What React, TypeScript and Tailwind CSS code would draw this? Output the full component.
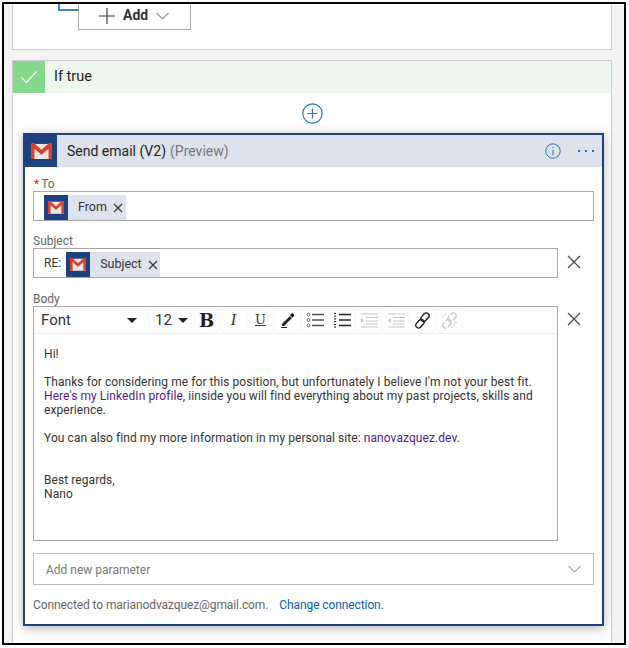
import { ReactNode } from "react";

function GmailIcon({ size = 22 }: { size?: number }) {
  return (
    <svg width={size} height={size * 0.8} viewBox="0 0 22 17.6">
      <path d="M0 1h22v16.6H0z" fill="#e8e6e4" />
      <path d="M3 1l8 7 8-7v3l-8 7-8-7z" fill="#cfcac7" />
      <path d="M0 1.5C0 .6.6 0 1.5 0H3l8 7.2L19 0h1.5c.9 0 1.5.6 1.5 1.500v16.100h-3.600V6l-7.400 6.200L3.600 6v11.600H0z" fill="#d8412f" />
    </svg>
  );
}

function Token({ label, className }: { label: string; className: string }) {
  return (
    <div className={`flex h-[25px] self-end items-stretch bg-[#dee2ec] ${className}`}>
      <div className="flex w-6 shrink-0 items-center justify-center bg-[#1f4180]">
        <GmailIcon size={16} />
      </div>
      <span className="ml-[10px] self-center text-[12.5px] text-[#333]">{label}</span>
      <svg className="ml-[6px] self-center" width="10" height="10" viewBox="0 0 10 10" stroke="#333" strokeWidth="1.2">
        <path d="M1 1l8 8M9 1l-8 8" />
      </svg>
    </div>
  );
}

function CloseIcon() {
  return (
    <svg width="14" height="14" viewBox="0 0 14 14" stroke="#444" strokeWidth="1.1">
      <path d="M1 1l12 12M13 1L1 13" />
    </svg>
  );
}

function ToolButton({ children }: { children: ReactNode }) {
  return (
    <div className="flex h-[23px] w-[25px] items-center justify-center rounded-sm bg-white shadow-[0_0_1px_rgba(0,0,0,0.18)]">
      {children}
    </div>
  );
}

function ListIcon({ ordered }: { ordered?: boolean }) {
  const color = ordered ? "#222" : "#555";
  return (
    <svg width="18" height="16" viewBox="0 0 18 16" fill="none" stroke={color}>
      {ordered ? (
        <path d="M1 1.500h2M1 4h2M1 7h2M1 9.500h2M1 12.500h2M1 15h2" strokeWidth="1.200" />
      ) : (
        <>
          <circle cx="2.500" cy="2.500" r="1.400" strokeWidth="0.900" />
          <circle cx="2.500" cy="8" r="1.400" strokeWidth="0.900" />
          <circle cx="2.500" cy="13.500" r="1.400" strokeWidth="0.900" />
        </>
      )}
      <path d="M6 2.500h12M6 8h12M6 13.500h12" strokeWidth="1.300" />
    </svg>
  );
}

function IndentIcon({ outdent }: { outdent?: boolean }) {
  return (
    <svg width="18" height="15" viewBox="0 0 18 15" stroke="#c4c4c4" fill="none">
      <path d="M1 1h17M6 4.500h12M6 8h12M6 11h12M1 14h17" strokeWidth="1" />
      <path d={outdent ? "M4 5v5L1 7.500z" : "M1 5v5l3-2.500z"} fill="#c4c4c4" stroke="none" />
    </svg>
  );
}

function LinkIcon({ broken }: { broken?: boolean }) {
  const color = broken ? "#c9c9c9" : "#222";
  return (
    <svg width="17" height="17" viewBox="0 0 17 17" fill="none" stroke={color} strokeWidth="1.400">
      <rect x="8.200" y="0.500" width="5.500" height="9.500" rx="2.700" transform="rotate(42 11 5.200)" strokeDasharray={broken ? "8 2" : undefined} />
      <rect x="3.200" y="7" width="5.500" height="9.500" rx="2.700" transform="rotate(42 6 11.700)" strokeDasharray={broken ? "8 2" : undefined} />
      {broken && <path d="M2 2l2 2M5 .5v2M.5 5h2M12 12l2 2M14 10.500h2M10.500 14v2" strokeWidth="0.900" />}
    </svg>
  );
}

function Field({ label, children }: { label: ReactNode; children: ReactNode }) {
  return (
    <div>
      <div className="h-[14px] text-[12px] leading-[14px] text-[#666]">{label}</div>
      {children}
    </div>
  );
}

export default function App() {
  return (
    <div className="h-[648px] w-[629px] bg-white pt-[2px] pl-[2px]">
      <div className="flex h-[643px] w-[624px] flex-col overflow-hidden border-2 border-black bg-[#f3f3f3] font-['Roboto',sans-serif]">
        <div className="ml-2 mr-3 flex h-[46px] shrink-0 items-start border-x border-b border-[#cfcfcf] bg-white pl-[45px]">
          <div className="h-[7px] w-5 border-b-2 border-l-2 border-[#3a85d0]" />
          <div className="flex h-[26px] w-[113px] items-center border-x border-b border-[#a9a9a9] bg-white pb-[2px] pl-5">
            <svg width="16" height="16" viewBox="0 0 16 16" stroke="#333" strokeWidth="1.100">
              <path d="M8 0v16M0 8h16" />
            </svg>
            <span className="ml-2 text-[14px] font-bold text-[#333]">Add</span>
            <svg className="ml-2" width="13" height="8" viewBox="0 0 13 8" fill="none" stroke="#555">
              <path d="M.5 1l6 6 6-6" />
            </svg>
          </div>
        </div>

        <div className="ml-2 mr-3 mt-[10px] flex flex-1 flex-col items-center border-x border-t border-[#d0d0d0] bg-white">
          <div className="flex h-8 w-full items-center bg-[#edf7ed]">
            <div className="flex h-8 w-8 items-center justify-center bg-[#86d98c]">
              <svg width="16" height="12" viewBox="0 0 16 12" fill="none" stroke="#fff" strokeWidth="1.200">
                <path d="M.5 6.500l5 5L15.500.5" />
              </svg>
            </div>
            <span className="ml-[9px] text-[14.5px] text-[#222]">If true</span>
          </div>

          <svg className="mt-[10px] shrink-0" width="21" height="21" viewBox="0 0 21 21" fill="none" stroke="#2a6fc0">
            <circle cx="10.500" cy="10.500" r="9.700" strokeWidth="1.200" />
            <path d="M10.500 5.500v10M5.500 10.500h10" strokeWidth="1.200" />
          </svg>

          <div className="ml-[10px] mt-[9px] h-[493px] w-[581px] shrink-0 self-start border-2 border-[#1f4180] bg-white shadow-[0_2px_10px_rgba(0,0,0,0.3)]">
            <div className="flex h-8 items-center bg-[#dee2ec]">
              <div className="flex h-8 w-8 items-center justify-center bg-[#1f4180]">
                <GmailIcon size={21} />
              </div>
              <span className="ml-[10px] text-[14px] text-[#222]">Send email (V2)</span>
              <span className="ml-1 text-[14px] text-[#777]">(Preview)</span>
              <svg className="ml-auto" width="16" height="16" viewBox="0 0 16 16" fill="none" stroke="#2a6fc0">
                <circle cx="8" cy="8" r="7.200" />
                <path d="M8 7v5M8 4v1.400" />
              </svg>
              <div className="ml-[17px] mr-2 flex gap-[5px]">
                <span className="h-[2px] w-[2px] bg-[#2a6fc0]" />
                <span className="h-[2px] w-[2px] bg-[#2a6fc0]" />
                <span className="h-[2px] w-[2px] bg-[#2a6fc0]" />
              </div>
            </div>

            <div className="px-2 pt-[10px]">
              <Field label={<><span className="ml-[1px] mr-[2px] text-[#e02020]">*</span>To</>}>
                <div className="flex h-[30px] border border-[#a6a6a6] pl-[10px]">
                  <Token label="From" className="w-[82px]" />
                </div>
              </Field>

              <div className="mt-[13px] flex items-end">
                <div className="w-[525px]">
                  <Field label="Subject">
                    <div className="flex h-[30px] border border-[#a6a6a6] pl-[10px]">
                      <span className="mr-[5px] self-center text-[12px] text-[#333]">RE:</span>
                      <Token label="Subject" className="w-[94px]" />
                    </div>
                  </Field>
                </div>
                <div className="ml-[9px] mb-[9px] flex">
                  <CloseIcon />
                </div>
              </div>

              <div className="mt-[14px] flex items-start">
                <div className="w-[525px]">
                  <Field label="Body">
                    <div className="h-[235px] border border-[#a6a6a6]">
                      <div className="flex h-[27px] items-center gap-[2px] border-b border-[#efefef] pl-[1px]">
                        <div className="flex h-[23px] w-[113px] items-center justify-between rounded-sm bg-white pl-[6px] pr-[11px] shadow-[0_0_1px_rgba(0,0,0,0.18)]">
                          <span className="text-[15px] text-[#333]">Font</span>
                          <span className="h-0 w-0 border-x-[5px] border-t-[5px] border-x-transparent border-t-[#222]" />
                        </div>
                        <div className="mr-[1px] flex h-[23px] w-[41px] items-center justify-between rounded-sm bg-white pl-[5px] pr-[3px] shadow-[0_0_1px_rgba(0,0,0,0.18)]">
                          <span className="text-[15px] text-[#333]">12</span>
                          <span className="h-0 w-0 border-x-[5px] border-t-[5px] border-x-transparent border-t-[#222]" />
                        </div>
                        <ToolButton>
                          <span className="font-['DejaVu_Serif',serif] text-[18px] font-bold text-[#222]">B</span>
                        </ToolButton>
                        <ToolButton>
                          <span className="font-['Liberation_Serif',serif] text-[16px] italic text-[#333]">I</span>
                        </ToolButton>
                        <ToolButton>
                          <span className="font-['DejaVu_Serif',serif] text-[13px] text-[#333] underline">U</span>
                        </ToolButton>
                        <ToolButton>
                          <svg width="16" height="16" viewBox="0 0 16 16">
                            <path d="M2 12L10 4l2 2-8 8H2z" fill="#222" />
                            <path d="M10 3l1.500-1.500c1-1 3.500 1.500 2.500 2.500L12.500 5.500z" fill="#111" />
                            <path d="M1 15.500h6" stroke="#222" />
                          </svg>
                        </ToolButton>
                        <ToolButton><ListIcon /></ToolButton>
                        <ToolButton><ListIcon ordered /></ToolButton>
                        <ToolButton><IndentIcon /></ToolButton>
                        <ToolButton><IndentIcon outdent /></ToolButton>
                        <ToolButton><LinkIcon /></ToolButton>
                        <ToolButton><LinkIcon broken /></ToolButton>
                      </div>
                      <div className="px-[10px] pt-[13px] text-[12px] leading-[14px] tracking-[0.07px] text-[#333]">
                        <p>Hi!</p>
                        <p className="mt-[14px]">
                          Thanks for considering me for this position, but unfortunately I believe I'm not your best fit.
                          <br />
                          <span className="text-[#551a8b]">Here's my LinkedIn profile</span>, iinside you will find everything about my past projects, skills and
                          <br />
                          experience.
                        </p>
                        <p className="mt-[14px]">
                          You can also find my more information in my personal site: <span className="text-[#551a8b]">nanovazquez.dev.</span>
                        </p>
                        <p className="mt-[28px]">
                          Best regards,
                          <br />
                          Nano
                        </p>
                      </div>
                    </div>
                  </Field>
                </div>
                <div className="ml-[9px] mt-[20px] flex">
                  <CloseIcon />
                </div>
              </div>

              <div className="mt-3 flex h-8 items-center justify-between border border-[#bdbdbd] pl-3 pr-[12px]">
                <span className="pt-[1px] text-[12px] text-[#777]">Add new parameter</span>
                <svg width="13" height="8" viewBox="0 0 13 8" fill="none" stroke="#777">
                  <path d="M.5 1l6 6 6-6" />
                </svg>
              </div>

              <div className="mt-[12px] text-[12px] leading-[16px] tracking-[-0.1px] text-[#666]">
                Connected to marianodvazquez@gmail.com.
                <span className="ml-[11px] text-[#0b5cad]">Change connection.</span>
              </div>
            </div>
          </div>
        </div>
      </div>
    </div>
  );
}
